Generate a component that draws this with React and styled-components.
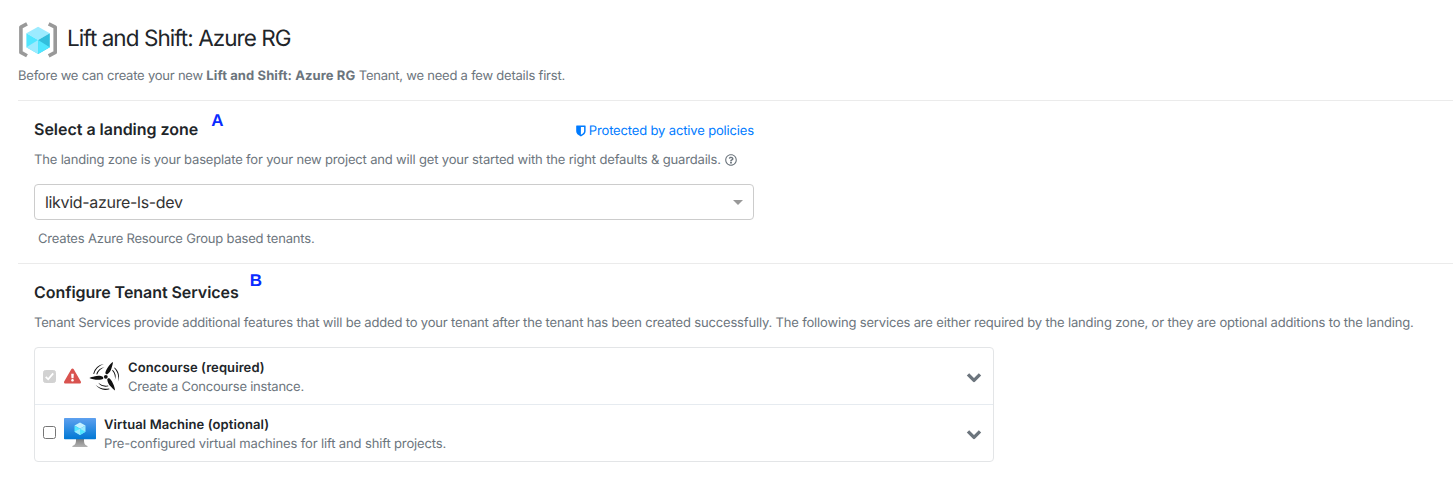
import React from "react";
import styled, { createGlobalStyle } from "styled-components";
import { FaRegQuestionCircle, FaExclamationTriangle } from "react-icons/fa";

const GlobalStyle = createGlobalStyle`
  *, *::before, *::after { box-sizing: border-box; }
  body {
    margin: 0;
    background: #fff;
    color: #212529;
    font-family: Inter, "Liberation Sans", sans-serif;
    font-size: 13px;
    overflow: hidden;
    text-rendering: geometricPrecision;
  }
`;

const Page = styled.main`
  height: 496px;
  padding: 20px 0 0 18px;
  white-space: nowrap;
`;

const Header = styled.header`
  height: 81px;
  border-bottom: 1px solid #ebebeb;
`;

const TitleRow = styled.div`
  display: flex;
  align-items: center;
  gap: 8px;
  height: 40px;
`;

const Title = styled.h1`
  margin: 0;
  font-size: 22.5px;
  font-weight: 400;
  line-height: 36px;
  padding-bottom: 2px;
  letter-spacing: -0.95px;
`;

const Muted = styled.p`
  margin: 0;
  color: #6c757d;
  font-size: 13px;
  line-height: 22px;
  letter-spacing: ${(p) => p.$track ?? -0.168}px;
`;

const Intro = styled(Muted)`
  margin-top: 5px;
  b { letter-spacing: 0.1px; }
`;

const Section = styled.section`
  padding: 18px 0 0 16px;
`;

const LandingSection = styled(Section)`
  height: 163px;
  border-bottom: 1px solid #ebebeb;
`;

const HeadingRow = styled.div`
  display: flex;
  width: 720px;
  height: 22px;
  margin-bottom: 8px;
`;

const Heading = styled.h2`
  margin: 0;
  font-size: 16px;
  font-weight: 600;
  line-height: 21px;
  letter-spacing: ${(p) => p.$track ?? -0.05}px;
`;

const Marker = styled.span`
  margin: ${(p) => p.$top}px 0 0 ${(p) => p.$left}px;
  color: #0a2cff;
  font: bold 17px/22px "Liberation Sans", Arial, sans-serif;
`;

const PolicyLink = styled.a`
  display: flex;
  align-items: center;
  gap: 3px;
  height: 23px;
  margin-left: auto;
  color: #007bff;
  font-size: 13px;
  letter-spacing: -0.15px;
`;

const HelpIcon = styled(FaRegQuestionCircle)`
  width: 12px;
  height: 12px;
  margin-left: 4px;
  vertical-align: -2px;
`;

const Select = styled.div`
  display: flex;
  align-items: center;
  justify-content: space-between;
  width: 720px;
  height: 36px;
  margin-top: 13px;
  padding: 0 10px;
  border: 1px solid #ccc;
  border-radius: 4px;
  color: #333;
  font-size: 16px;
  letter-spacing: -0.32px;
`;

const Caret = styled.span`
  border: 5px solid transparent;
  border-top-color: #999;
  border-bottom-width: 0;
  margin-top: 1px;
`;

const SelectHelp = styled(Muted)`
  margin: 8px 0 0 4px;
`;

const ServiceList = styled.div`
  width: 960px;
  margin-top: 13px;
  border: 1px solid #e3e5e7;
  border-radius: 4px;
`;

const ServiceRow = styled.div`
  display: flex;
  align-items: center;
  height: 57px;
  padding: 0 11px 0 8px;
  & + & {
    height: 56px;
    box-shadow: 0 -1px 0 #e6ebf0;
  }
`;

const Checkbox = styled.span`
  display: flex;
  width: 13px;
  height: 13px;
  margin: 0 8px 1px 0;
  border-radius: 2.5px;
  border: 1px solid ${(p) => (p.$checked ? "#d2d2d2" : "#767676")};
  background: ${(p) => (p.$checked ? "#d2d2d2" : "#fff")};
`;

const Warning = styled(FaExclamationTriangle)`
  width: 17px;
  height: 16px;
  margin: 0 8px 1px 0;
  color: #d9534f;
`;

const ServiceText = styled.div`
  flex: 1;
  margin-left: ${(p) => p.$gap}px;
  padding-top: 3px;
`;

const ServiceName = styled.div`
  color: #212529;
  font-weight: 600;
  line-height: 19px;
  letter-spacing: 0.09px;
`;

const ServiceInfo = styled(Muted)`
  line-height: 19px;
`;

const ResourceGroupIcon = () => (
  <svg width="41" height="40" viewBox="0 0 41 40">
    <g fill="none" stroke="#999" strokeWidth="3.6" strokeLinejoin="round">
      <path d="M9 3.9 2.9 7.1V32.4L9 35.8" />
      <path d="M30.7 3.9 37.2 7.1V32.4L30.7 35.8" />
    </g>
    <path d="M20.1 6.8 31.8 13.3 20.1 20 8.4 13.3z" fill="#9cebff" />
    <path d="M8.4 13.3 20.1 20V34L8.4 27.2z" fill="#50e6ff" />
    <path d="M31.8 13.3 20.1 20V34L31.8 27.2z" fill="#32bedd" />
    <path d="M8.4 27.2 20.1 20V34z" fill="#9cebff" />
    <path d="M31.8 27.2 20.1 20V34z" fill="#50e6ff" />
  </svg>
);

const ShieldIcon = () => (
  <svg width="10" height="12" viewBox="0 0 10 12">
    <path
      fill="currentColor"
      fillRule="evenodd"
      d="M.7.5H9.1Q9.6.5 9.6 1V6.2C9.6 8.5 7.8 10 4.9 11.4 2 10 .2 8.5.2 6.2V1Q.2.5.7.5zM4.9 2V9.7C6.9 8.6 8.1 7.6 8.1 6.2V2z"
    />
  </svg>
);

const Chevron = styled.svg`
  margin-top: ${(p) => p.$drop || 0}px;
  fill: none;
  stroke: #6c757d;
  stroke-width: 3.4px;
  stroke-linejoin: round;
`;

const ChevronIcon = ({ drop }) => (
  <Chevron width="16" height="16" viewBox="0 0 16 16" $drop={drop}>
    <path d="M2 5.4 8 11.4 14 5.4" />
  </Chevron>
);

const ConcourseIcon = () => (
  <svg width="32" height="32" viewBox="0 0 32 32">
    <g fill="#111">
      {[0, 120, 240].map((angle) => (
        <g key={angle} transform={`rotate(${angle} 16.8 15.8)`}>
          <path d="M14.2 16C12 14.6 8.6 14.4 6 15.3 3.6 15.8 1.6 16.3.4 17 3.4 18.7 11.6 19.6 14.2 17.8z" />
          <path d="M4.2 12.8A13 13 0 0 1 15 2.9A15.2 15.2 0 0 0 5.1 12.9z" />
          <path d="M7.3 13.3A9.8 9.8 0 0 1 15.4 6.2A12 12 0 0 0 8.2 13.4z" />
        </g>
      ))}
      <circle cx="16.8" cy="15.8" r="1.9" />
    </g>
  </svg>
);

const VirtualMachineIcon = () => (
  <svg width="32" height="32" viewBox="0 0 32 32">
    <defs>
      <linearGradient id="screen" x1="0" y1="1" x2="0" y2="0">
        <stop offset="0" stopColor="#0078d4" />
        <stop offset="1" stopColor="#5ea0ef" />
      </linearGradient>
      <linearGradient id="stand" x1="0" y1="0" x2="0" y2="1">
        <stop offset="0" stopColor="#808080" />
        <stop offset="1" stopColor="#b3b3b3" />
      </linearGradient>
    </defs>
    <path d="M12 22H20C19.9 26 20.6 28.2 23.5 28.9V30H8.4V28.9C11.3 28.2 12.1 26 12 22z" fill="url(#stand)" />
    <rect y="1" width="32" height="21.3" rx=".8" fill="url(#screen)" />
    <path d="M16 5.4 21.5 8.5 16 11.8 10.5 8.5z" fill="#c3f1ff" />
    <path d="M10.5 8.5 16 11.8V18L10.5 14.8z" fill="#50e6ff" />
    <path d="M21.5 8.5 16 11.8V18L21.5 14.8z" fill="#9cebff" />
    <path d="M10.5 14.8 16 11.8V18z" fill="#9cebff" />
    <path d="M21.5 14.8 16 11.8V18z" fill="#50e6ff" />
  </svg>
);

const CheckMark = () => (
  <svg width="11" height="11" viewBox="0 0 11 11" fill="none" stroke="#fff" strokeWidth="1.8">
    <path d="M1.7 5.9 4.2 8.3 9.2 2.4" />
  </svg>
);

export default function App() {
  return (
    <Page>
      <GlobalStyle />
      <Header>
        <TitleRow>
          <ResourceGroupIcon />
          <Title>Lift and Shift: Azure RG</Title>
        </TitleRow>
        <Intro $track={-0.22}>
          Before we can create your new <b>Lift and Shift: Azure RG</b> Tenant, we need a few details first.
        </Intro>
      </Header>
      <LandingSection>
        <HeadingRow>
          <Heading $track={-0.02}>Select a landing zone</Heading>
          <Marker $left={13} $top={-9}>A</Marker>
          <PolicyLink><ShieldIcon />Protected by active policies</PolicyLink>
        </HeadingRow>
        <Muted>
          The landing zone is your baseplate for your new project and will get your started with the right defaults &amp; guardails.
          <HelpIcon />
        </Muted>
        <Select>likvid-azure-ls-dev<Caret /></Select>
        <SelectHelp $track={-0.19}>Creates Azure Resource Group based tenants.</SelectHelp>
      </LandingSection>
      <Section>
        <HeadingRow>
          <Heading>Configure Tenant Services</Heading>
          <Marker $left={11} $top={-12}>B</Marker>
        </HeadingRow>
        <Muted>
          Tenant Services provide additional features that will be added to your tenant after the tenant has been created successfully. The following services are either required by the landing zone, or they are optional additions to the landing.
        </Muted>
        <ServiceList>
          <ServiceRow>
            <Checkbox $checked><CheckMark /></Checkbox>
            <Warning />
            <ConcourseIcon />
            <ServiceText $gap={7}>
              <ServiceName>Concourse (required)</ServiceName>
              <ServiceInfo $track={-0.22}>Create a Concourse instance.</ServiceInfo>
            </ServiceText>
            <ChevronIcon />
          </ServiceRow>
          <ServiceRow>
            <Checkbox />
            <VirtualMachineIcon />
            <ServiceText $gap={8}>
              <ServiceName>Virtual Machine (optional)</ServiceName>
              <ServiceInfo $track={-0.14}>Pre-configured virtual machines for lift and shift projects.</ServiceInfo>
            </ServiceText>
            <ChevronIcon drop={2} />
          </ServiceRow>
        </ServiceList>
      </Section>
    </Page>
  );
}
